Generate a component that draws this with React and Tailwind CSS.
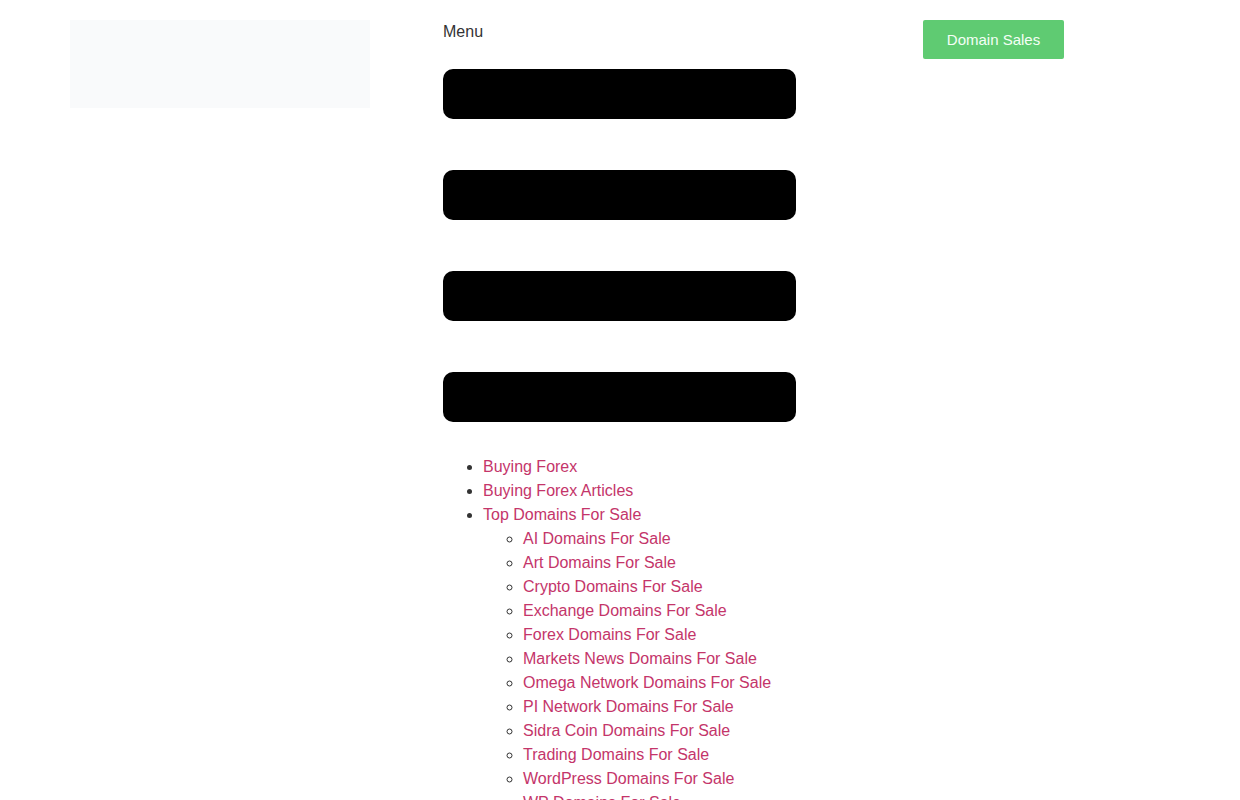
const subItems = [
  'AI Domains For Sale',
  'Art Domains For Sale',
  'Crypto Domains For Sale',
  'Exchange Domains For Sale',
  'Forex Domains For Sale',
  'Markets News Domains For Sale',
  'Omega Network Domains For Sale',
  'PI Network Domains For Sale',
  'Sidra Coin Domains For Sale',
  'Trading Domains For Sale',
  'WordPress Domains For Sale',
  'WP Domains For Sale',
]

export default function App() {
  return (
    <div className="min-h-screen bg-white font-['Liberation_Sans',Arial,sans-serif] text-[16px] text-[#333]">
      <div className="flex items-start pt-5">
        {/* Logo placeholder */}
        <div className="ml-[70px] w-[300px] h-[88px] bg-[#f9fafb]" />

        {/* Menu */}
        <div className="ml-[73px] w-[353px]">
          <div className="leading-[24px]">Menu</div>
          <div className="mt-[25px] flex flex-col gap-[51px]">
            <div className="h-[50px] rounded-[10px] bg-black" />
            <div className="h-[50px] rounded-[10px] bg-black" />
            <div className="h-[50px] rounded-[10px] bg-black" />
            <div className="h-[50px] rounded-[10px] bg-black" />
          </div>
          <ul className="mt-[33px] list-disc pl-10 leading-[24px] w-[500px]">
            <li><a className="text-[#c4356a]">Buying Forex</a></li>
            <li><a className="text-[#c4356a]">Buying Forex Articles</a></li>
            <li>
              <a className="text-[#c4356a]">Top Domains For Sale</a>
              <ul className="list-[circle] pl-10">
                {subItems.map((s) => (
                  <li key={s}><a className="text-[#c4356a]">{s}</a></li>
                ))}
              </ul>
            </li>
          </ul>
        </div>

        {/* CTA */}
        <a className="ml-[127px] w-[141px] h-[39px] pt-[2px] flex items-center justify-center rounded-[2px] bg-[#5fcb72] text-[15px] text-[#f4fff6]">
          Domain Sales
        </a>
      </div>
    </div>
  )
}
